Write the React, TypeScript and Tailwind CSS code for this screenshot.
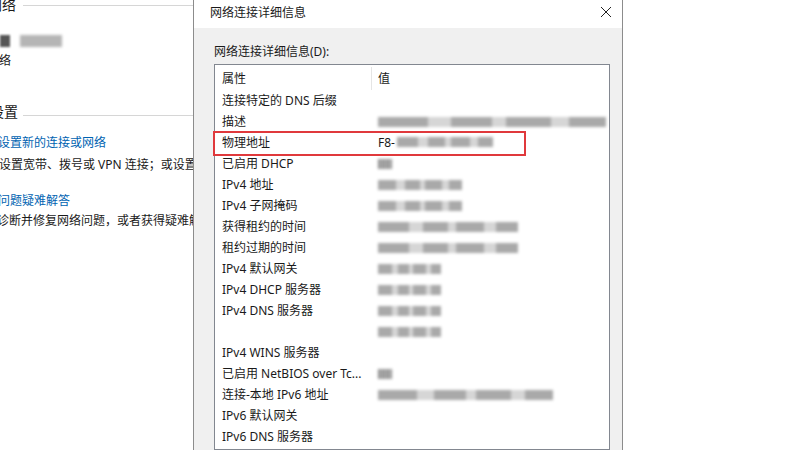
import React from "react";

const FONT = { fontFamily: '"Noto Sans", "Noto Sans CJK SC", sans-serif' };

type Row = { label: string; value?: React.ReactNode };

function Blur({ width, dark = false }: { width: number; dark?: boolean }) {
  // blurred placeholder for hidden values
  const segs = [0.22, 0.1, 0.18, 0.06, 0.2, 0.08, 0.16];
  return (
    <span className="inline-flex h-[10px] items-stretch blur-[1.4px]" style={{ width }}>
      {segs.map((s, i) => (
        <span
          key={i}
          className={i % 2 === 0 ? (dark ? "bg-[#8f8f8f]" : "bg-[#a9a9a9]") : "bg-[#d6d6d6]"}
          style={{ width: `${s * 100}%` }}
        />
      ))}
    </span>
  );
}

const rows: Row[] = [
  { label: "连接特定的 DNS 后缀" },
  { label: "描述", value: <Blur width={228} /> },
  {
    label: "物理地址",
    value: (
      <span className="flex items-center">
        <span>F8-</span>
        <span className="ml-[2px]">
          <Blur width={96} />
        </span>
      </span>
    ),
  },
  { label: "已启用 DHCP", value: <Blur width={14} dark /> },
  { label: "IPv4 地址", value: <Blur width={84} /> },
  { label: "IPv4 子网掩码", value: <Blur width={84} /> },
  { label: "获得租约的时间", value: <Blur width={140} /> },
  { label: "租约过期的时间", value: <Blur width={140} /> },
  { label: "IPv4 默认网关", value: <Blur width={63} /> },
  { label: "IPv4 DHCP 服务器", value: <Blur width={63} /> },
  { label: "IPv4 DNS 服务器", value: <Blur width={63} /> },
  { label: "", value: <Blur width={63} /> },
  { label: "IPv4 WINS 服务器" },
  { label: "已启用 NetBIOS over Tc...", value: <Blur width={14} dark /> },
  { label: "连接-本地 IPv6 地址", value: <Blur width={175} /> },
  { label: "IPv6 默认网关" },
  { label: "IPv6 DNS 服务器" },
];

function LeftPanel() {
  return (
    <div className="flex h-full w-[193px] shrink-0 flex-col overflow-hidden bg-white text-[12px] text-[#1a1a1a]">
      <div className="flex h-[14px] items-center -mt-[2px]">
        <span className="-ml-[12px] shrink-0 text-[14px] leading-[14px]">网络</span>
        <div className="ml-[7px] h-px flex-1 bg-[#d6d6d6]" />
      </div>
      <div className="mt-[21px] flex h-[15px] items-center">
        <span className="h-[12px] w-[10px] bg-[#555] blur-[1px]" />
        <span className="ml-[10px] h-[12px] w-[42px] bg-[#b5b5b5] blur-[1.5px]" />
      </div>
      <div className="mt-[5px] h-[15px] leading-[15px] -ml-[1px]">络</div>
      <div className="mt-[37px] flex h-[14px] items-center">
        <span className="-ml-[10px] shrink-0 text-[14px] leading-[14px]">设置</span>
        <div className="ml-[5px] mt-[6px] h-px flex-1 bg-[#d6d6d6]" />
      </div>
      <div className="mt-[16px] h-[15px] whitespace-nowrap leading-[15px] text-[#0063b1] -ml-[2px]">设置新的连接或网络</div>
      <div className="mt-[7px] h-[15px] whitespace-nowrap leading-[15px] -ml-[1px]">设置宽带、拨号或 VPN 连接；或设置路由器或接入点。</div>
      <div className="mt-[21px] h-[15px] whitespace-nowrap leading-[15px] text-[#0063b1] -ml-[2px]">问题疑难解答</div>
      <div className="mt-[5px] h-[15px] whitespace-nowrap leading-[15px] -ml-[3px]">诊断并修复网络问题，或者获得疑难解答信息。</div>
    </div>
  );
}

function DetailsDialog() {
  return (
    <div className="flex h-full w-[430px] shrink-0 flex-col border-x border-[#8c8c8c] bg-[#f0f0f0] text-[12px] text-[#1a1a1a]">
      {/* title bar */}
      <div className="flex h-[28px] shrink-0 items-center justify-between bg-white pl-[16px] pr-[10px]">
        <span className="mb-[2px] leading-[14px]">网络连接详细信息</span>
        <svg width="12" height="12" viewBox="0 0 12 12" className="mb-[4px]">
          <path d="M1 1 L11 11 M11 1 L1 11" stroke="#222" strokeWidth="1" />
        </svg>
      </div>
      <div className="flex min-h-0 flex-1 flex-col pl-[20px] pr-[12px]">
        <div className="mt-[17px] h-[14px] leading-[14px]">网络连接详细信息(D):</div>
        <div className="mt-[5px] flex-1 border border-[#828790] bg-white">
          {/* header */}
          <div className="flex h-[25px] items-center pt-[2px]">
            <div className="flex h-full w-[157px] items-center border-r border-[#e5e5e5] pl-[7px]">属性</div>
            <div className="pl-[6px]">值</div>
          </div>
          {rows.map((r, i) => (
            <div key={i} className="relative flex h-[21px] items-center whitespace-nowrap">
              <div className="w-[157px] shrink-0 pl-[7px]">{r.label}</div>
              <div className="flex items-center pl-[6px]">{r.value}</div>
              {r.label === "物理地址" && (
                <span className="absolute -left-[2px] -top-[1px] h-[25px] w-[313px] border-[2.5px] border-[#e0393c]" />
              )}
            </div>
          ))}
        </div>
      </div>
    </div>
  );
}

export default function App() {
  return (
    <div className="flex h-[450px] w-[800px] overflow-hidden bg-white" style={FONT}>
      <LeftPanel />
      <DetailsDialog />
      <div className="flex-1 bg-white" />
    </div>
  );
}
